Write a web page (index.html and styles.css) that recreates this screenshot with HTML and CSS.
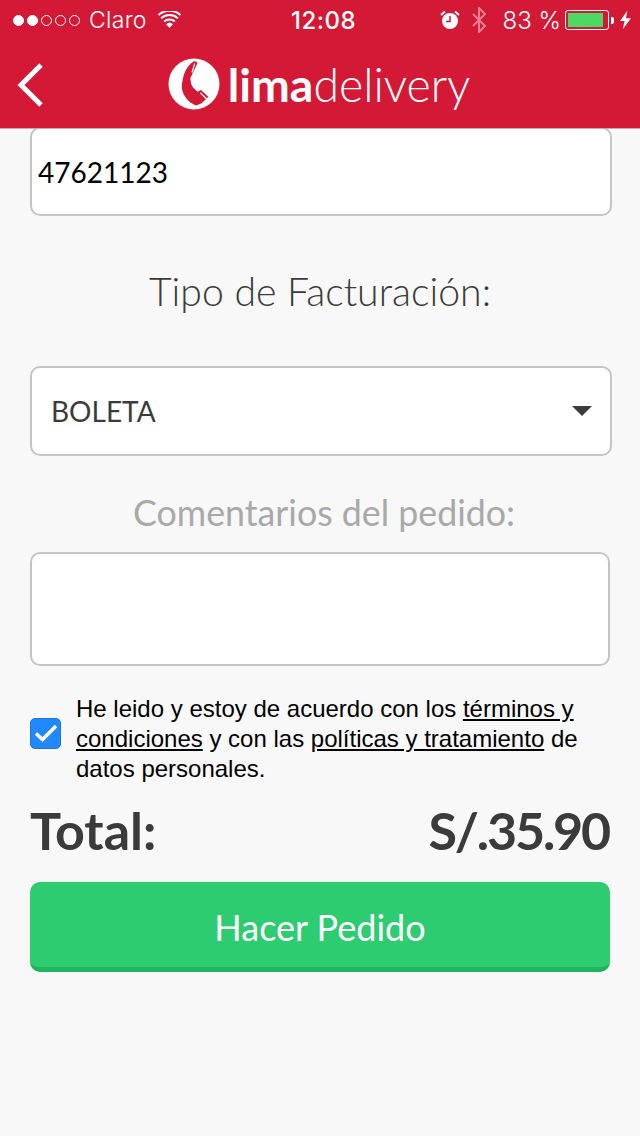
FILE: index.html
```html
<!DOCTYPE html>
<html lang="es">
<head>
  <meta charset="UTF-8">
  <meta name="viewport" content="width=device-width, initial-scale=1.0">
  <title>Lima Delivery</title>
  <link rel="stylesheet" href="styles.css">
</head>
<body>
  <header class="top">
    <div class="status">
      <div class="status-left">
        <span class="dot on"></span><span class="dot on"></span><span class="dot"></span><span class="dot"></span><span class="dot"></span>
        <span class="carrier">Claro</span>
        <svg class="wifi" width="25" height="18" viewBox="0 0 24 18">
          <path d="M12 17L8.600 13.200a5 5 0 0 1 6.800 0z" fill="#fff"/>
          <path d="M6.600 10.600a8 8 0 0 1 10.800 0M3.600 7.200a12.600 12.600 0 0 1 16.800 0M1 4a16.500 16.500 0 0 1 22 0" fill="none" stroke="#fff" stroke-width="2"/>
        </svg>
      </div>
      <div class="clock">12:08</div>
      <div class="status-right">
        <svg class="alarm" width="20" height="20" viewBox="0 0 20 20">
          <circle cx="10" cy="11" r="8" fill="#fff"/>
          <path d="M10 6v5.500H6" fill="none" stroke="#d31936" stroke-width="1.500"/>
          <path d="M1 5l4-3.500M19 5l-4-3.500" stroke="#fff" stroke-width="2"/>
        </svg>
        <svg class="bt" width="16" height="26" viewBox="0 0 16 26">
          <path d="M2 7l12 12-6 6V1l6 6L2 19" fill="none" stroke="#e9808f" stroke-width="2"/>
        </svg>
        <span class="battery-pct">83 %</span>
        <span class="battery"><span class="battery-fill"></span></span><span class="battery-tip"></span>
        <svg class="bolt" width="11" height="20" viewBox="0 0 12 20">
          <path d="M8 0L0 11h5l-2 9 9-12H6.500z" fill="#fff"/>
        </svg>
      </div>
    </div>
    <div class="navbar">
      <svg class="back" width="30" height="46" viewBox="0 0 30 46">
        <path d="M26 3L6 23l20 20" fill="none" stroke="#fff" stroke-width="5"/>
      </svg>
      <div class="logo">
        <svg class="logo-icon" width="52" height="52" viewBox="0 0 52 52">
          <circle cx="26" cy="26" r="25.500" fill="#fff"/>
          <path d="M26.300 3C18 8 14.700 17 13.700 28.700 14 37 21 45 28 47.500L33.700 45.300 40.300 38.700 33 32 29.700 33.700C26 31 23.500 28 23 25.300L22.300 20.300 24.700 15.300 29.700 4.700z" fill="#d31936"/>
          <path d="M26.800 5.500L24 14.500M32.300 34.700L39 41.300" stroke="#fff" stroke-width="1.200"/>
        </svg>
        <span class="logo-text"><b>lima</b>delivery</span>
      </div>
    </div>
  </header>

  <main class="content">
    <div class="field field-dni">47621123</div>
    <h2 class="billing-title">Tipo de Facturación:</h2>
    <div class="field field-select">
      <span>BOLETA</span>
      <span class="caret"></span>
    </div>
    <h3 class="comments-title">Comentarios del pedido:</h3>
    <div class="field field-comments"></div>

    <div class="terms">
      <span class="check">
        <svg width="24" height="18" viewBox="0 0 24 18">
          <path d="M2 9.500l6.500 6L22 2" fill="none" stroke="#fff" stroke-width="3.500"/>
        </svg>
      </span>
      <p>He leido y estoy de acuerdo con los <u>términos y</u><br><u>condiciones</u> y con las <u>políticas y tratamiento</u> de<br>datos personales.</p>
    </div>

    <div class="total">
      <span>Total:</span>
      <span class="amount">S/.35.90</span>
    </div>
    <button class="order" type="button">Hacer Pedido</button>
  </main>
</body>
</html>
```

FILE: styles.css
```css
* {
  box-sizing: border-box;
}

body {
  margin: 0;
  height: 1136px;
  overflow: hidden;
  background-color: #f8f8f8;
  color: #3b3b3b;
  font-family: Lato, sans-serif;
}

.top {
  height: 129px;
  position: relative;
  z-index: 1;
  background-color: #d31936;
  color: #fff;
  border-bottom: 1px solid #b9b0b2;
}

.status {
  height: 40px;
  display: flex;
  align-items: center;
  justify-content: space-between;
  padding: 0 9px 0 13px;
  font-family: Inter, sans-serif;
  font-size: 23px;
  font-weight: 300;
  position: relative;
}

.status-left, .status-right {
  display: flex;
  align-items: center;
}

.dot {
  width: 11px;
  height: 11px;
  margin-right: 3px;
  border: 1px solid #fff;
  border-radius: 50%;
}

.dot.on {
  background-color: #fff;
}

.carrier {
  margin-left: 6px;
  letter-spacing: 0.3px;
}

.wifi {
  margin-left: 10px;
}

.clock {
  position: absolute;
  left: 7px;
  right: 0;
  text-align: center;
  font-size: 24px;
  font-weight: 500;
  letter-spacing: 0.5px;
}

.bt {
  margin-left: 11px;
}

.battery-pct {
  margin-left: 16px;
  font-size: 24px;
}

.battery {
  width: 44px;
  height: 20px;
  margin-left: 4px;
  padding: 2px;
  border: 1px solid #fff;
  border-radius: 3px;
}

.battery-fill {
  display: block;
  width: 35px;
  height: 14px;
  background-color: #4cd964;
}

.battery-tip {
  width: 3px;
  height: 7px;
  margin-left: 2px;
  background-color: #fff;
  border-radius: 0 2px 2px 0;
}

.bolt {
  margin-left: 6px;
}

.navbar {
  height: 88px;
  display: flex;
  align-items: center;
  justify-content: center;
  position: relative;
}

.back {
  position: absolute;
  left: 15px;
  top: 22px;
}

.logo {
  display: flex;
  align-items: center;
  gap: 8px;
  margin-right: 2px;
}

.logo-text {
  font-family: Lato, sans-serif;
  font-size: 46.400px;
  font-weight: 300;
}

.logo-text b {
  font-weight: 700;
}

.content {
  padding: 0 30px;
}

.field {
  background-color: #fff;
  border: 2px solid #c4c4c4;
  border-radius: 10px;
}

.field-dni {
  width: 582px;
  height: 89px;
  margin-top: -2px;
  padding: 0 6px;
  display: flex;
  align-items: center;
  font-size: 28px;
  color: #000;
}

.billing-title {
  margin: 51px 0 51px;
  text-align: center;
  font-size: 39.200px;
  line-height: 48px;
  font-weight: 300;
  color: #3b3b3b;
}

.field-select {
  width: 582px;
  height: 90px;
  padding: 0 18px 0 19px;
  display: flex;
  align-items: center;
  justify-content: space-between;
  font-size: 28px;
}

.caret {
  width: 0;
  height: 0;
  border-left: 10px solid transparent;
  border-right: 10px solid transparent;
  border-top: 10px solid #3b3b3b;
}

.comments-title {
  margin: 35px 0 17px;
  padding-left: 8px;
  text-align: center;
  font-size: 35.750px;
  line-height: 44px;
  font-weight: 400;
  color: #a9a9a9;
}

.field-comments {
  width: 580px;
  height: 114px;
}

.terms {
  display: flex;
  align-items: center;
  gap: 15px;
  margin-top: 28px;
}

.check {
  flex: none;
  width: 31px;
  height: 31px;
  margin-bottom: 12px;
  display: flex;
  align-items: center;
  justify-content: center;
  background-color: #2188ff;
  border: 1px solid #1b76dd;
  border-radius: 5px;
}

.terms p {
  margin: 0;
  font-family: "Liberation Sans", sans-serif;
  font-size: 24px;
  line-height: 30px;
  color: #000;
}

.total {
  display: flex;
  justify-content: space-between;
  margin-top: 15px;
  font-size: 52px;
  line-height: 62px;
  font-weight: 700;
}

.amount {
  letter-spacing: -2.200px;
  margin-right: 1px;
}

.order {
  display: block;
  width: 100%;
  height: 90px;
  margin-top: 21px;
  padding-top: 6px;
  background-color: #2ecc71;
  color: #fff;
  font-family: Lato, sans-serif;
  font-size: 36px;
  border: none;
  border-bottom: 5px solid #1fb45e;
  border-radius: 10px;
}
```
